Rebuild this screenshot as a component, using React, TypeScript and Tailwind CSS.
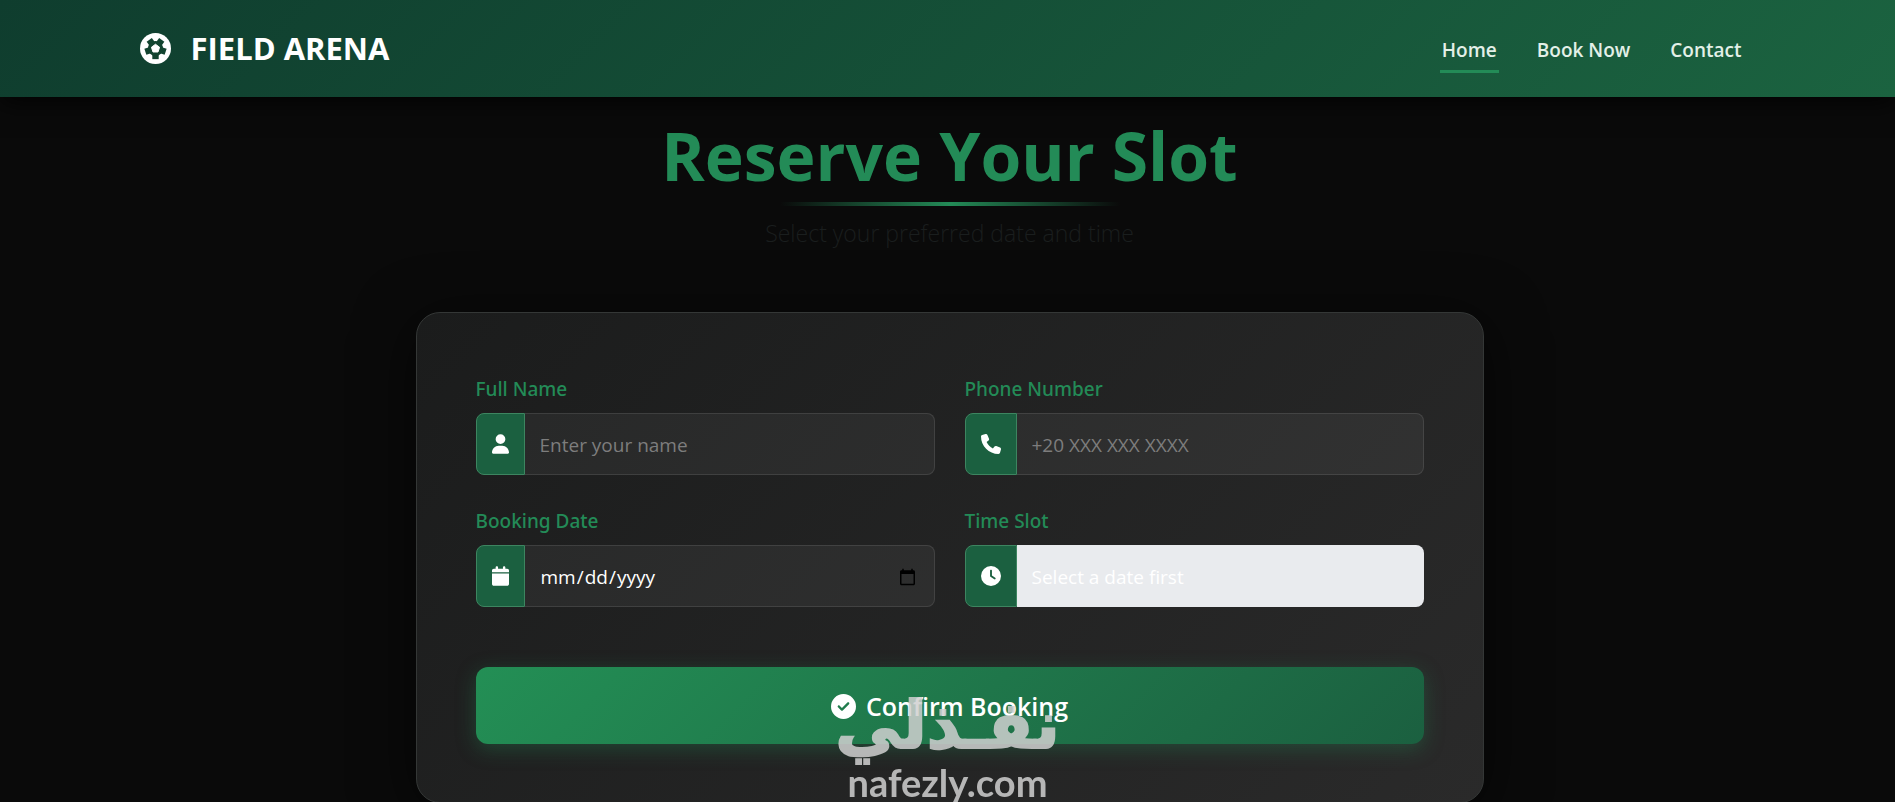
import { useState } from "react";
import type { ReactNode } from "react";
import {
  FaCalendar,
  FaCircleCheck,
  FaClock,
  FaPhone,
  FaUser,
} from "react-icons/fa6";

const navLinks = ["Home", "Book Now", "Contact"];

const inputClass =
  "min-w-0 flex-1 rounded-r-lg border border-l-0 border-white/10 bg-white/5 px-[15px] pt-0.5 text-[19px] text-white outline-none placeholder:text-[#7d7d7d]";

const BallIcon = () => (
  <svg viewBox="0 0 32 32" className="size-[31px]" aria-hidden="true">
    <circle cx="16" cy="16" r="16" fill="#fff" />
    <g stroke="#124430" strokeWidth="6.6">
      {[0, 72, 144, 216, 288].map((angle) => (
        <path
          key={angle}
          d="M16 16V27"
          transform={`rotate(${angle} 16 16)`}
        />
      ))}
    </g>
    <circle cx="16" cy="16" r="7.8" fill="#124430" />
    <path
      d="M16 11.6l4.2 3.1-1.6 4.9h-5.2l-1.6-4.9z"
      fill="#fff"
      stroke="#fff"
      strokeLinejoin="round"
    />
  </svg>
);

const Field = ({
  id,
  label,
  icon,
  children,
}: {
  id: string;
  label: string;
  icon: ReactNode;
  children: ReactNode;
}) => (
  <div>
    <label
      htmlFor={id}
      className="mb-2.5 block font-['Noto_Sans',sans-serif] text-[19px] leading-7 font-medium text-[#238b57]"
    >
      {label}
    </label>
    <div className="flex h-[62px]">
      <span className="flex items-center rounded-l-lg border border-[#3d8560] bg-[#1b6040] px-[15px] text-xl text-white">
        {icon}
      </span>
      {children}
    </div>
  </div>
);

const App = () => {
  const [active, setActive] = useState("Home");
  const [name, setName] = useState("");
  const [phone, setPhone] = useState("");
  const [date, setDate] = useState("");

  return (
    <div className="min-h-screen bg-[#0a0a0a] font-['Open_Sans','Noto_Sans',sans-serif]">
      {/* HEADER */}
      <header className="relative bg-linear-135 from-[#0f3d2e] to-[#1b6340] shadow-[0_5px_24px_rgba(0,0,0,0.8)]">
        <div className="mx-auto flex h-[97px] max-w-[1616px] items-center justify-between pr-3">
          <a href="#" className="flex items-center gap-5 text-white">
            <BallIcon />
            <span className="pb-0.5 text-[31px] leading-10 font-bold">
              FIELD ARENA
            </span>
          </a>

          <nav className="flex gap-9">
            {navLinks.map((link) => (
              <a
                key={link}
                href="#"
                onClick={() => setActive(link)}
                className={`mt-1 border-b-3 px-0.5 pt-2 pb-1.5 text-[19px] leading-7 font-semibold text-[#e3f0e8] ${
                  active === link ? "border-[#238b57]" : "border-transparent"
                }`}
              >
                {link}
              </a>
            ))}
          </nav>
        </div>
      </header>

      <main className="pl-1">
        {/* TITLE */}
        <div className="flex flex-col items-center pt-5">
          <h1 className="text-[66px] leading-[76px] font-bold text-[#238b57]">
            Reserve Your Slot
          </h1>
          <div className="mt-[9px] h-1 w-[340px] bg-linear-to-r from-transparent via-[#238b57] to-transparent" />
          <p className="mt-[9px] text-[23px] leading-9 font-light text-[#1a1e1e]">
            Select your preferred date and time
          </p>
        </div>

        {/* FORM */}
        <form
          onSubmit={(e) => e.preventDefault()}
          className="mx-auto mt-[61px] max-w-[1068px] rounded-3xl border border-[#343736] bg-linear-135 from-[#1b1c1c] to-[#2a2a2a] px-[59px] pt-[62px] pb-[58px] shadow-[0_10px_60px_rgba(0,0,0,0.6)]"
        >
          <div className="grid grid-cols-2 gap-x-[30px] gap-y-8">
            <Field
              id="name"
              label="Full Name"
              icon={<FaUser className="w-[17px]" />}
            >
              <input
                id="name"
                type="text"
                value={name}
                onChange={(e) => setName(e.target.value)}
                placeholder="Enter your name"
                className={inputClass}
              />
            </Field>

            <Field id="phone" label="Phone Number" icon={<FaPhone />}>
              <input
                id="phone"
                type="tel"
                value={phone}
                onChange={(e) => setPhone(e.target.value)}
                placeholder="+20 XXX XXX XXXX"
                className={inputClass}
              />
            </Field>

            <Field
              id="date"
              label="Booking Date"
              icon={<FaCalendar className="w-[17px]" />}
            >
              <input
                id="date"
                type="date"
                value={date}
                onChange={(e) => setDate(e.target.value)}
                className={inputClass}
              />
            </Field>

            <Field id="slot" label="Time Slot" icon={<FaClock />}>
              <select
                id="slot"
                disabled
                className="min-w-0 flex-1 appearance-none rounded-r-lg bg-[#e9ebee] px-[15px] pt-0.5 text-[19px] text-white opacity-100"
              >
                <option>Select a date first</option>
              </select>
            </Field>
          </div>

          <button
            type="submit"
            className="mt-[60px] flex h-[77px] w-full items-center justify-center gap-2.5 rounded-xl bg-linear-135 from-[#238f55] to-[#1b6040] pt-0.5 text-[25px] font-semibold text-white shadow-[0_5px_20px_rgba(35,139,87,0.35)]"
          >
            <FaCircleCheck />
            Confirm Booking
          </button>
        </form>
      </main>

      {/* WATERMARK */}
      <div className="pointer-events-none fixed bottom-0 left-1/2 flex -translate-x-1/2 flex-col items-center text-[#d0d0d0] opacity-85">
        <span
          lang="ar"
          dir="rtl"
          className="font-['DejaVu_Sans',sans-serif] text-[66px] leading-[72px] font-bold [-webkit-text-stroke:2px_#d0d0d0]"
        >
          نفـذلي
        </span>
        <span className="font-['Lato',sans-serif] text-[38px] leading-10 font-bold">
          nafezly.com
        </span>
      </div>
    </div>
  );
};

export default App;
